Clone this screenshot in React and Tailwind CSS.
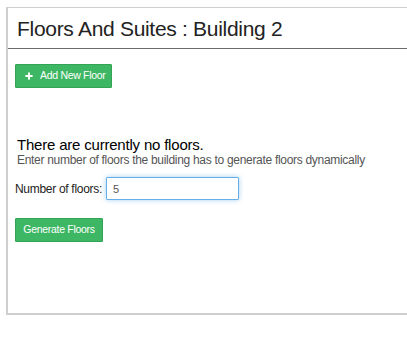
import { Plus } from 'lucide-react';

export default function App() {
  return (
    <div className="w-[407px] h-[338px] bg-white pt-[7px] pl-[6px]" style={{ fontFamily: '"Liberation Sans", Arial, sans-serif' }}>
      <div className="h-[308px] border-t border-l-2 border-b-2 border-[#cfcfcf] flex flex-col">
        <div className="h-[41px] border-b border-[#6b6b6b] flex items-center pl-[9px]">
          <h1 className="text-[21px] tracking-[-0.3px] text-[#222] leading-none pt-[1px]">Floors And Suites : Building 2</h1>
        </div>
        <div className="pl-[7px] pt-[15px]">
          <button className="h-[24px] w-[97px] bg-[#3db763] border border-[#33a356] rounded-[1px] text-white text-[10.5px] tracking-[-0.3px] whitespace-nowrap flex items-center gap-[6px] pl-[8px]">
            <Plus className="w-[10px] h-[10px] shrink-0" strokeWidth={4.5} />
            <span>Add New Floor</span>
          </button>
          <div className="mt-[48px] pl-[2px]">
            <div className="text-[15px] tracking-[-0.2px] text-black leading-[17px]">There are currently no floors.</div>
            <div className="text-[12px] tracking-[-0.3px] text-[#555] leading-[14px]">Enter number of floors the building has to generate floors dynamically</div>
          </div>
          <div className="mt-[10px] flex items-center gap-[4px]">
            <span className="text-[12px] tracking-[-0.3px] text-[#222]">Number of floors:</span>
            <input
              defaultValue="5"
              className="w-[133px] h-[23px] border border-[#66afe9] rounded-[1px] px-[6px] text-[11px] text-[#555] outline-none shadow-[0_0_5px_rgba(102,175,233,0.6)]"
            />
          </div>
          <button className="mt-[18px] h-[24px] w-[88px] bg-[#3db763] border border-[#33a356] rounded-[1px] text-white text-[10.5px] tracking-[-0.3px] whitespace-nowrap">
            Generate Floors
          </button>
        </div>
      </div>
    </div>
  );
}
